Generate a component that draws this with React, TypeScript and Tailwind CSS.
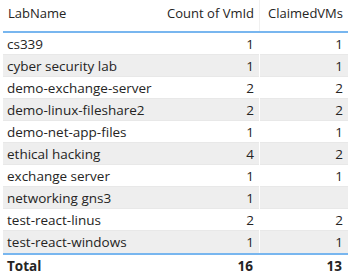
const rows: [string, number, number | null][] = [
  ['cs339', 1, 1],
  ['cyber security lab', 1, 1],
  ['demo-exchange-server', 2, 2],
  ['demo-linux-fileshare2', 2, 2],
  ['demo-net-app-files', 1, 1],
  ['ethical hacking', 4, 2],
  ['exchange server', 1, 1],
  ['networking gns3', 1, null],
  ['test-react-linus', 2, 2],
  ['test-react-windows', 1, 1],
]

export default function App() {
  return (
    <div
      className="w-[354px] h-[279px] bg-white pl-[3px] pr-[6px] text-[13px] text-[#252423] overflow-hidden"
      style={{ fontFamily: '"Open Sans", "Noto Sans", sans-serif' }}
    >
      {/* header */}
      <div className="grid grid-cols-[156px_101px_88px] h-[33px] border-b-2 border-[#78b6ef]">
        <div className="pl-[5px] pt-[4px]">LabName</div>
        <div className="pr-[5px] pt-[4px] text-right border-r border-[#f0f0f0]">Count of VmId</div>
        <div className="pr-[5px] pt-[4px] text-right">ClaimedVMs</div>
      </div>

      {/* rows */}
      {rows.map(([name, count, claimed], i) => (
        <div
          key={name}
          className={`grid grid-cols-[156px_101px_88px] h-[22px] items-center text-[13.5px] ${
            i % 2 === 1 ? 'bg-[#eeeeee]' : 'bg-white'
          } ${i < rows.length - 1 ? 'border-b border-[#e8e8e8]' : ''}`}
        >
          <div className="pl-[4px] leading-[22px] whitespace-nowrap">{name}</div>
          <div className="pr-[5px] text-right leading-[22px] border-r border-white h-full">{count}</div>
          <div className="pr-[5px] text-right leading-[22px]">{claimed ?? ''}</div>
        </div>
      ))}

      {/* total */}
      <div className="grid grid-cols-[156px_101px_88px] h-[24px] items-center border-t-2 border-[#78b6ef] font-bold text-[13.5px]">
        <div className="pl-[4px]">Total</div>
        <div className="pr-[7px] text-right">16</div>
        <div className="pr-[6px] text-right">13</div>
      </div>
    </div>
  )
}
